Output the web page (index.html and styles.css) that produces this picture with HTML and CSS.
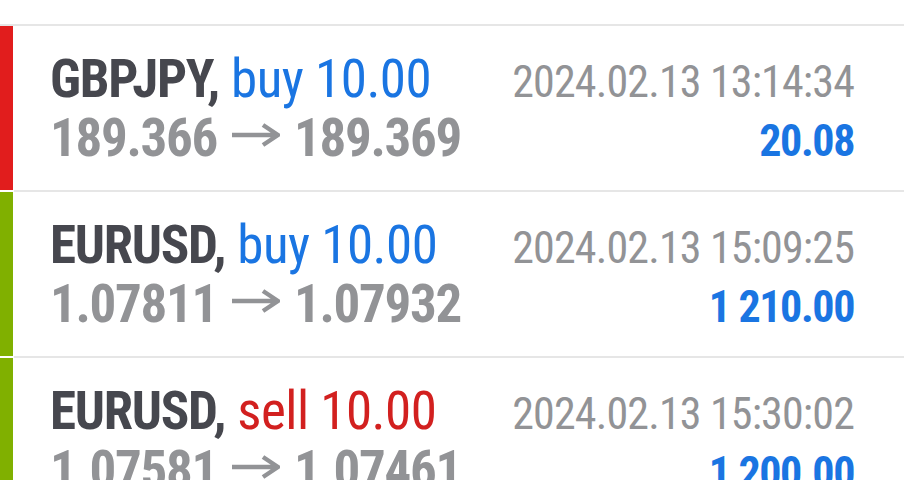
FILE: index.html
```html
<!DOCTYPE html>
<html lang="en">
<head>
    <meta charset="UTF-8">
    <meta name="viewport" content="width=device-width, initial-scale=1.0">
    <title>History</title>
    <link rel="stylesheet" href="styles.css">
</head>
<body>
    <div class="top"></div>
    <ul class="deals">
        <li class="deal">
            <div class="bar loss"></div>
            <div class="info">
                <div class="line">
                    <span class="title"><b class="symbol">GBPJPY,</b> <span class="buy">buy 10.00</span></span>
                    <span class="time">2024.02.13 13:14:34</span>
                </div>
                <div class="line">
                    <span class="prices">189.366<svg class="arrow" viewBox="0 0 48 24"><path d="M0 12H45M31 2L46 12L31 22"/></svg>189.369</span>
                    <span class="profit">20.08</span>
                </div>
            </div>
        </li>
        <li class="deal">
            <div class="bar win"></div>
            <div class="info">
                <div class="line">
                    <span class="title"><b class="symbol">EURUSD,</b> <span class="buy">buy 10.00</span></span>
                    <span class="time">2024.02.13 15:09:25</span>
                </div>
                <div class="line">
                    <span class="prices">1.07811<svg class="arrow" viewBox="0 0 48 24"><path d="M0 12H45M31 2L46 12L31 22"/></svg>1.07932</span>
                    <span class="profit">1 210.00</span>
                </div>
            </div>
        </li>
        <li class="deal">
            <div class="bar win"></div>
            <div class="info">
                <div class="line">
                    <span class="title"><b class="symbol">EURUSD,</b> <span class="sell">sell 10.00</span></span>
                    <span class="time">2024.02.13 15:30:02</span>
                </div>
                <div class="line">
                    <span class="prices">1.07581<svg class="arrow" viewBox="0 0 48 24"><path d="M0 12H45M31 2L46 12L31 22"/></svg>1.07461</span>
                    <span class="profit">1 200.00</span>
                </div>
            </div>
        </li>
    </ul>
</body>
</html>
```
FILE: styles.css
```css
html {
    overflow: hidden;
}
body {
    margin: 0;
    font-family: "Roboto Condensed", Roboto, sans-serif;
    background: #fff;
}
.top {
    height: 24px;
    border-bottom: 2px solid #e6e6e6;
}
.deals {
    list-style: none;
    margin: 0;
    padding: 0;
}
.deal {
    display: flex;
}
.bar {
    width: 13px;
    margin-right: 1px;
    margin-bottom: 2px;
    flex-shrink: 0;
}
.bar.loss {
    background-color: #e11d1d;
}
.bar.win {
    background-color: #80b000;
}
.info {
    flex: 1;
    padding: 24px 50px 22px 36px;
    border-bottom: 2px solid #e6e6e6;
}
.line {
    display: flex;
    justify-content: space-between;
    align-items: baseline;
    height: 59px;
    line-height: 59px;
    white-space: nowrap;
}
.title, .prices {
    font-size: 53px;
}
.symbol {
    color: #46474e;
    font-weight: bold;
    letter-spacing: -1.3px;
}
.buy, .sell {
    letter-spacing: -0.5px;
}
.buy {
    color: #1a75e2;
}
.sell {
    color: #d2201f;
}
.prices {
    color: #929396;
    font-weight: bold;
    letter-spacing: -1.3px;
}
.arrow {
    width: 48px;
    height: 24px;
    margin: 0 14px 0 15px;
    vertical-align: 9px;
    fill: none;
    stroke: #929396;
    stroke-width: 4.5;
}
.time {
    font-size: 44px;
    color: #929396;
    letter-spacing: -0.85px;
}
.profit {
    font-size: 44px;
    font-weight: bold;
    color: #1a75e2;
    letter-spacing: -1.4px;
}
```
